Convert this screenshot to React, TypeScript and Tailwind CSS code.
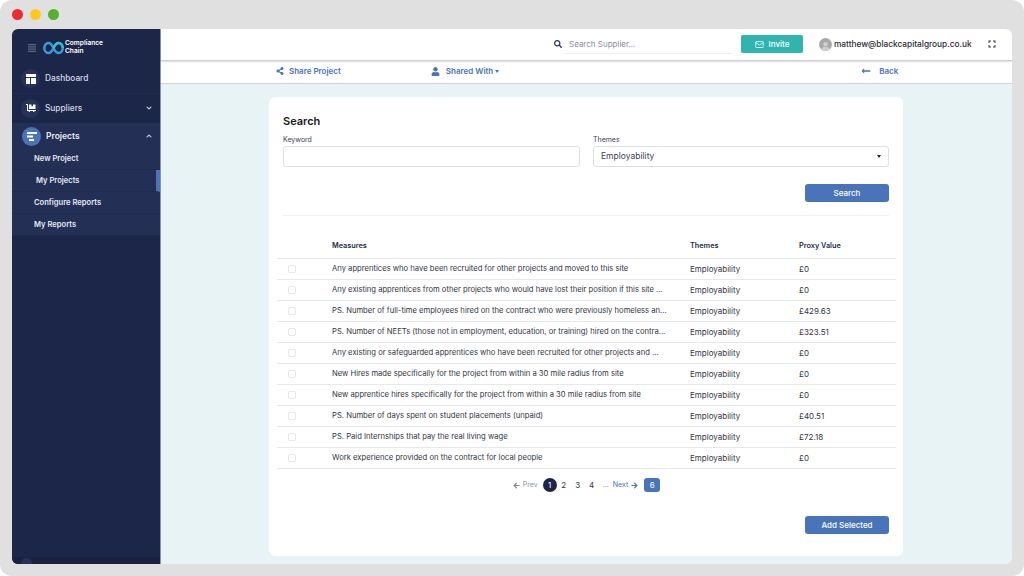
import React from "react";
import { Mail } from "lucide-react";
import { FaDollyFlatbed, FaSearch, FaShareAlt, FaUser, FaLongArrowAltLeft, FaArrowLeft, FaArrowRight, FaExpand, FaChevronDown, FaChevronUp } from "react-icons/fa";

const rows = [
  ["Any apprentices who have been recruited for other projects and moved to this site", "£0"],
  ["Any existing apprentices from other projects who would have lost their position if this site ...", "£0"],
  ["PS. Number of full-time employees hired on the contract who were previously homeless an...", "£429.63"],
  ["PS. Number of NEETs (those not in employment, education, or training) hired on the contra...", "£323.51"],
  ["Any existing or safeguarded apprentices who have been recruited for other projects and ...", "£0"],
  ["New Hires made specifically for the project from within a 30 mile radius from site", "£0"],
  ["New apprentice hires specifically for the project from within a 30 mile radius from site", "£0"],
  ["PS. Number of days spent on student placements (unpaid)", "£40.51"],
  ["PS. Paid Internships that pay the real living wage", "£72.18"],
  ["Work experience provided on the contract for local people", "£0"],
];

function Logo() {
  return (
    <svg width="21" height="14" viewBox="0 0 21 14" fill="none">
      <path d="M10.5 7C9 3.6 7.6 2 5.4 2 3 2 1.3 4.2 1.3 7s1.7 5 4.1 5c2.2 0 3.6-1.6 5.1-5s2.9-5 5.1-5c2.4 0 4.1 2.2 4.1 5s-1.7 5-4.1 5c-2.2 0-3.6-1.6-5.1-5Z" stroke="#3a9ad9" strokeWidth="2.5" />
      <path d="M10.5 7c1.5-3.4 2.9-5 5.1-5 2.4 0 4.1 2.2 4.1 5" stroke="#33bcd6" strokeWidth="2.5" />
    </svg>
  );
}

export default function App() {
  return (
    <div className="w-[1024px] h-[576px] overflow-hidden bg-white font-['Inter',sans-serif]">
      <div className="w-[1024px] h-[576px] rounded-[12px] bg-[#e0e0e0] flex flex-col px-3 pb-3">
        <div className="h-[29px] shrink-0 flex items-center gap-[7px] pb-[1px]">
          <span className="w-[11px] h-[11px] rounded-full bg-[#ee2b33]" />
          <span className="w-[11px] h-[11px] rounded-full bg-[#fdc921]" />
          <span className="w-[11px] h-[11px] rounded-full bg-[#55b02e]" />
        </div>
        <div className="flex-1 flex rounded-[6px] overflow-hidden min-h-0">
          {/* Sidebar */}
          <aside className="w-[149px] shrink-0 bg-[#1c2648] border-r border-[#8d93a8] flex flex-col text-white">
            <div className="h-[36px] flex items-center pl-[16px] pt-[1px]">
              <svg width="8" height="8" viewBox="0 0 8 8" fill="#5f6883"><path d="M0 0h8v1H0zM0 1.75h8v1H0zM0 3.5h8v1H0zM0 5.25h8v1H0zM0 7h8v1H0z" /></svg>
              <div className="ml-[7px] flex"><Logo /></div>
              <div className="ml-[1px] text-[6.6px] leading-[7.5px] font-semibold">Compliance<br />Chain</div>
            </div>
            <div className="h-[29px] flex items-center pl-[9px] pb-[1px] border-b border-[#212c50]">
              <span className="w-[19px] h-[19px] rounded-full bg-[#26325a] flex items-center justify-center">
                <svg width="10" height="10" viewBox="0 0 10 10" fill="#fff"><path d="M0 0h10v3H0zM0 4h4v6H0zM5 4h5v6H5z" /></svg>
              </span>
              <span className="ml-[5px] text-[8.3px] text-[#d6d9e4] font-medium">Dashboard</span>
            </div>
            <div className="h-[29px] flex items-center pl-[9px] pr-[8px] pb-[1px]">
              <span className="w-[19px] h-[19px] rounded-full bg-[#26325a] flex items-center justify-center">
                <FaDollyFlatbed size={10} className="text-white" />
              </span>
              <span className="ml-[5px] text-[8.3px] text-[#d6d9e4] font-medium">Suppliers</span>
              <FaChevronDown size={6} className="ml-auto text-[#d6d9e4]" />
            </div>
            <div className="bg-[#232f55] flex flex-col">
              <div className="h-[25px] flex items-center pl-[10px] pr-[8px] pt-[1px]">
                <span className="w-[19px] h-[19px] rounded-full bg-[#4a74b9] flex items-center justify-center">
                  <svg width="10" height="9" viewBox="0 0 10 9" fill="#fff"><path d="M0 0h10v2H0zM0 3.5h6v2H0zM2 7h5v2H2z" /></svg>
                </span>
                <span className="ml-[5px] text-[8.5px] font-semibold text-[#eceef4]">Projects</span>
                <FaChevronUp size={6} className="ml-auto text-[#d6d9e4]" />
              </div>
              {[
                ["New Project", "pl-[22px]", false],
                ["My Projects", "pl-[24px]", true],
                ["Configure Reports", "pl-[22px]", false],
                ["My Reports", "pl-[22px]", false],
              ].map(([t, p, active]) => (
                <div key={t as string} className={`h-[22px] pt-[1px] flex items-center text-[7.6px] font-semibold text-[#e6e8f0] border-b border-[#1f2a4e] ${p} ${active ? "border-r-[4px] border-r-[#4a74b9]" : ""}`}>
                  {t}
                </div>
              ))}
            </div>
            <div className="flex-1" />
            <div className="h-[7px] bg-[#1a2140] flex justify-center overflow-hidden items-start">
              <span className="w-[11px] h-[11px] rounded-full bg-[#26325a] mr-[119px] mt-[1px]" />
            </div>
          </aside>
          {/* Main */}
          <main className="flex-1 flex flex-col min-w-0 bg-[#e7f3f4]">
            <header className="h-[32px] shrink-0 bg-white rounded-tr-[6px] border-b border-[#cfcfcf] shadow-[0_1px_2px_rgba(0,0,0,0.15)] flex items-center pb-[1px] z-10">
              <FaSearch size={8} className="ml-[393px] text-[#2a3358]" />
              <div className="ml-[1px] w-[169px] h-[18px] flex items-center pl-[6px] border-b border-[#eceef2] text-[8px] text-[#8b8f9d] mt-[1px]">Search Supplier...</div>
              <div className="ml-[9px] w-[62px] h-[18px] bg-[#2fb5ad] rounded-[2px] flex items-center justify-center gap-[5px] text-white text-[8px] font-medium">
                <Mail size={9} /> Invite
              </div>
              <span className="ml-[16px] w-[13px] h-[13px] rounded-full bg-[#a9a9a9] flex items-end justify-center overflow-hidden">
                <FaUser size={9} className="text-[#d0d0d0]" />
              </span>
              <span className="ml-[2px] text-[8.3px] text-[#2b2b33] font-medium whitespace-nowrap">matthew@blackcapitalgroup.co.uk</span>
              <FaExpand size={8} className="ml-[16px] text-[#2a3358]" />
            </header>
            <div className="h-[23px] shrink-0 bg-white border-b border-[#cfd3d6] flex items-center pb-[2px] text-[8px] font-semibold text-[#4a74b9]">
              <FaShareAlt size={8} className="ml-[115px]" />
              <span className="ml-[5px]">Share Project</span>
              <FaUser size={9} className="ml-[90px]" />
              <span className="ml-[6px]">Shared With</span>
              <span className="ml-[2px] w-0 h-0 border-x-[2.5px] border-x-transparent border-t-[3px] border-t-[#4a74b9]" />
              <FaLongArrowAltLeft size={10} className="ml-[362px]" />
              <span className="ml-[8px]">Back</span>
            </div>
            <div className="flex-1 min-h-0 pt-[13px] pl-[108px] pb-[8px]">
              <section className="h-full w-[634px] bg-white rounded-[6px] flex flex-col px-[14px] pt-[17px]">
                <h2 className="text-[11px] leading-[14px] font-semibold text-[#1a1a1a]">Search</h2>
                <div className="flex gap-[13px] mt-[7px]">
                  <div className="w-[297px]">
                    <div className="text-[7px] leading-[9px] text-[#3a3f4f]">Keyword</div>
                    <div className="mt-[2px] h-[21px] border border-[#dcdfeb] rounded-[3px]" />
                  </div>
                  <div className="w-[296px]">
                    <div className="text-[7px] leading-[9px] text-[#3a3f4f]">Themes</div>
                    <div className="mt-[2px] h-[21px] border border-[#dcdfeb] rounded-[3px] flex items-center px-[7px] text-[8.5px] text-[#3b405a]">
                      Employability
                      <span className="ml-auto w-0 h-0 border-x-[2.5px] border-x-transparent border-t-[3px] border-t-[#222]" />
                    </div>
                  </div>
                </div>
                <div className="flex justify-end mt-[17px]">
                  <div className="w-[84px] h-[18px] bg-[#4a74b9] rounded-[3px] flex items-center justify-center text-white text-[8px] font-medium">Search</div>
                </div>
                <div className="h-px bg-[#f0f1f4] mt-[13px] w-[606px]" />
                <div className="-ml-[6px] w-[619px] mt-[25px]">
                  <div className="h-[18px] pt-[1px] flex items-start border-b border-[#e6e8ea] text-[7.3px] leading-[8px] font-semibold text-[#232c50]">
                    <span className="w-[55px]" />
                    <span className="w-[358px]">Measures</span>
                    <span className="w-[109px]">Themes</span>
                    <span>Proxy Value</span>
                  </div>
                  {rows.map(([m, v]) => (
                    <div key={m} className="h-[21px] flex items-center border-b border-[#e6e8ea] text-[8px] leading-[10px] text-[#33363f]">
                      <span className="ml-[11px] w-[8px] h-[8px] rounded-[2px] border border-[#e6e8ea] shrink-0" />
                      <span className="ml-[36px] w-[358px] pr-[4px] text-[7.65px] leading-[10px] whitespace-nowrap overflow-hidden">{m}</span>
                      <span className="w-[109px] mb-[1px]">Employability</span>
                      <span className="mb-[1px]">{v}</span>
                    </div>
                  ))}
                </div>
                <div className="flex items-center justify-center mt-[9px] text-[8px] text-[#33363f] pl-[1px]">
                  <FaArrowLeft size={7} className="text-[#7f8594]" />
                  <span className="ml-[3px] text-[7px] text-[#8a90a0]">Prev</span>
                  <span className="ml-[5px] w-[14px] h-[14px] rounded-full bg-[#1c2648] text-white flex items-center justify-center">1</span>
                  <span className="ml-[3px] w-[8px] text-center">2</span>
                  <span className="ml-[6px] w-[8px] text-center">3</span>
                  <span className="ml-[6px] w-[8px] text-center">4</span>
                  <span className="ml-[7px] text-[7px] text-[#8a90a0]">...</span>
                  <span className="ml-[4px] text-[7px] text-[#4a74b9]">Next</span>
                  <FaArrowRight size={7} className="ml-[3px] text-[#4a74b9]" />
                  <span className="ml-[6px] w-[16px] h-[14px] rounded-[3px] bg-[#4a74b9] text-white flex items-center justify-center">6</span>
                </div>
                <div className="flex justify-end mt-[24px]">
                  <div className="w-[84px] h-[18px] bg-[#4a74b9] rounded-[3px] flex items-center justify-center text-white text-[8px] font-medium">Add Selected</div>
                </div>
              </section>
            </div>
          </main>
        </div>
      </div>
    </div>
  );
}
